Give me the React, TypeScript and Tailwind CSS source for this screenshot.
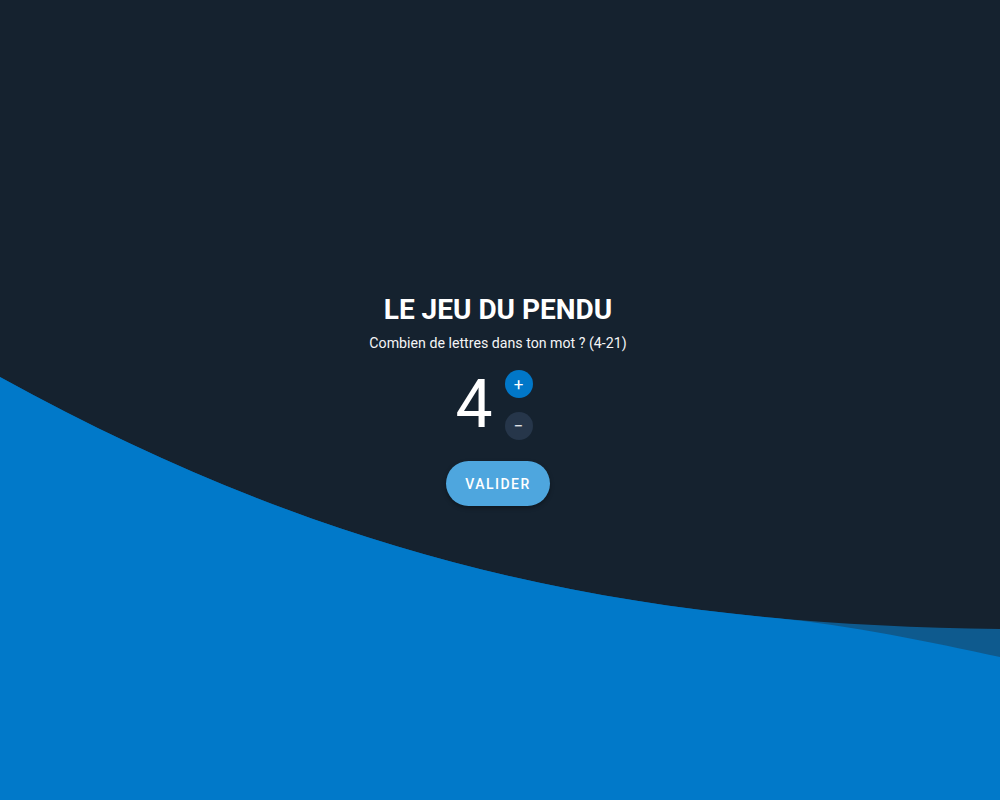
export default function App() {
  return (
    <div className="relative min-h-screen w-full overflow-hidden bg-[#15222f] font-['Roboto','Liberation_Sans',sans-serif]">
      <svg
        className="absolute inset-0 h-full w-full"
        viewBox="0 0 1000 800"
        preserveAspectRatio="none"
      >
        <path d="M0 377 C350 570 650 625 1000 629 L1000 800 L0 800 Z" fill="#0e5a8e" />
        <path
          d="M0 377 C273 527.5 515.6 594.1 775.2 618 C850 625 930 642 1000 657 L1000 800 L0 800 Z"
          fill="#0179c9"
        />
      </svg>

      <div className="relative flex min-h-screen flex-col items-center justify-center pr-[4px] text-white">
        <h1 className="text-[28px] leading-[32px] font-bold">LE JEU DU PENDU</h1>
        <p className="mt-[7px] text-[14.2px] leading-[20px] text-gray-100">
          Combien de lettres dans ton mot ? (4-21)
        </p>

        <div className="mt-[17px] flex items-center gap-3 pr-[8px]">
          <span className="text-[66px] leading-none font-normal">4</span>
          <div className="flex flex-col gap-[14px]">
            <button className="flex h-7 w-7 items-center justify-center rounded-full bg-[#0177c8] text-[17px] leading-none text-white">
              +
            </button>
            <button className="flex h-7 w-7 items-center justify-center rounded-full bg-[#26364a] text-[17px] leading-none text-gray-200">
              −
            </button>
          </div>
        </div>

        <button className="mt-[21px] h-[45px] w-[104px] rounded-full bg-[#4ea6de] pt-[2px] text-[14px] font-medium tracking-[1.5px] text-white shadow-[0_2px_4px_rgba(0,0,0,0.35)]">
          VALIDER
        </button>
      </div>
    </div>
  )
}
